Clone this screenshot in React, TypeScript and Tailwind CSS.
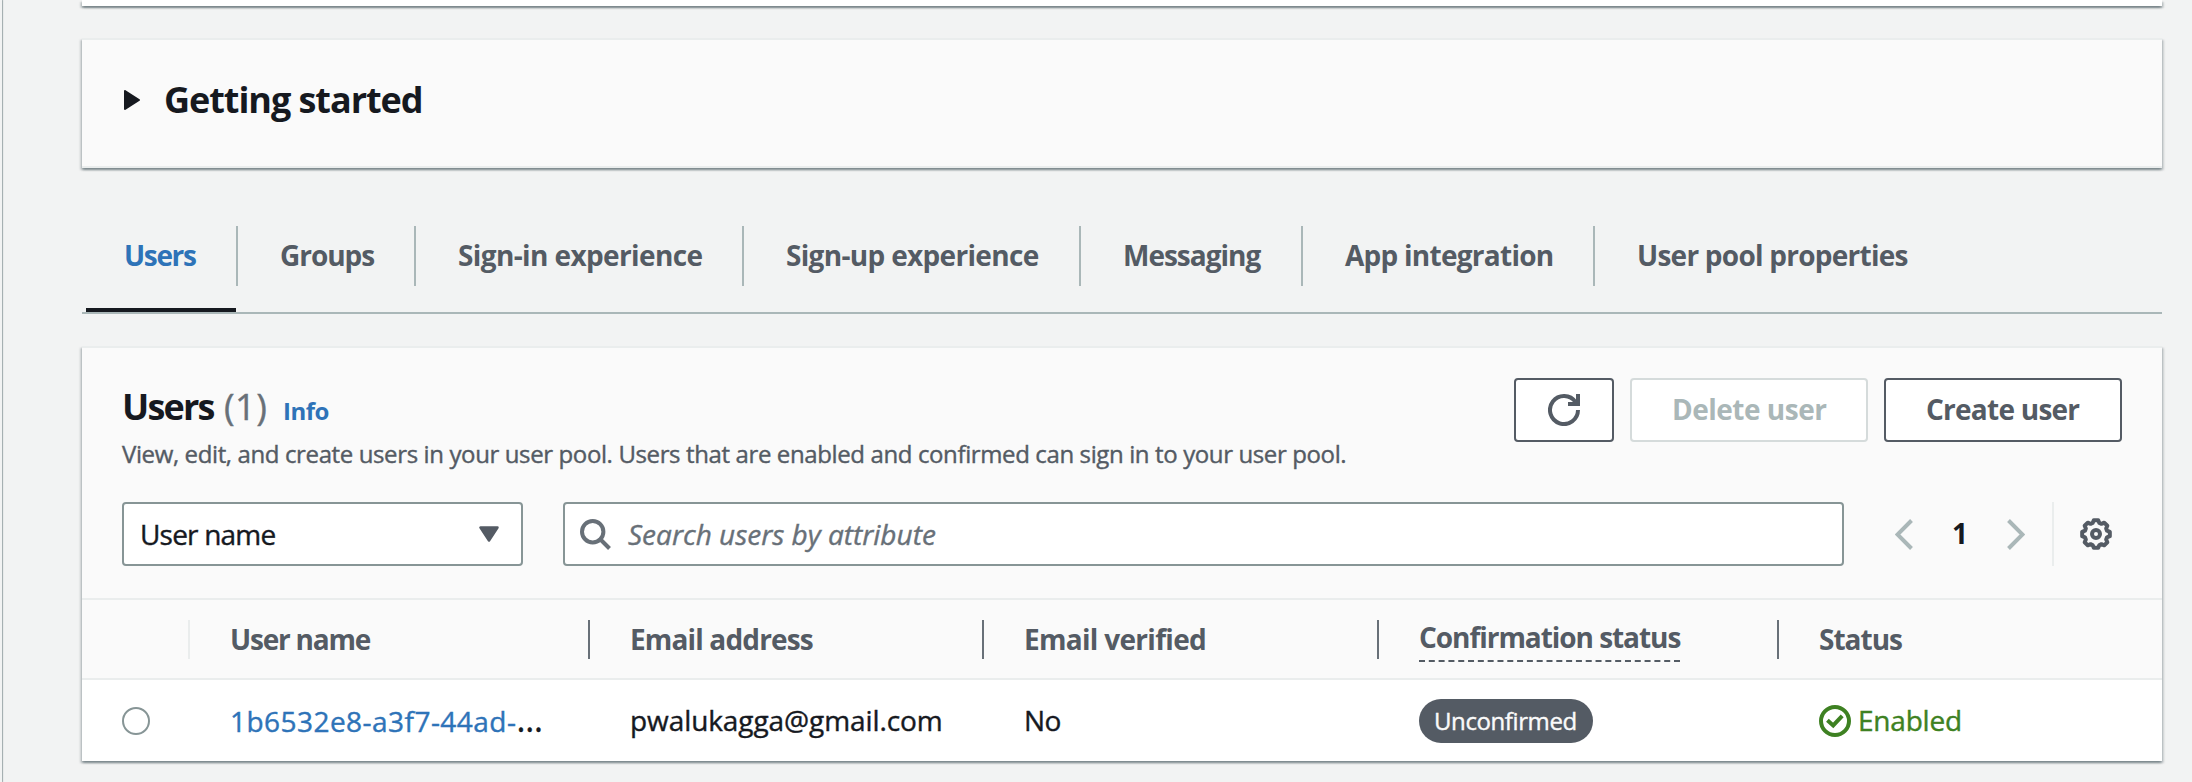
import React from "react";

const CARD_SHADOW =
  "shadow-[0_2px_2px_0_rgba(0,28,36,0.3),2px_2px_2px_0_rgba(0,28,36,0.15),-2px_2px_2px_0_rgba(0,28,36,0.15)]";

// Slightly sturdier strokes for regular-weight text.
const BODY = "[-webkit-text-stroke:0.4px_currentColor]";

const tabs = [
  { label: "Users", box: "w-[156px] pl-[42px] tracking-[-1.35px]", active: true },
  { label: "Groups", box: "w-[178px] pl-[42px] tracking-[-1.05px]" },
  { label: "Sign-in experience", box: "w-[328px] pl-[42px] tracking-[-0.62px]" },
  { label: "Sign-up experience", box: "w-[337px] pl-[42px] tracking-[-0.68px]" },
  { label: "Messaging", box: "w-[222px] pl-[42px] tracking-[-1px]" },
  { label: "App integration", box: "w-[292px] pl-[42px] tracking-[-0.74px]" },
  { label: "User pool properties", box: "w-[360px] pl-[42px] tracking-[-0.75px]" },
];

function gearOutline() {
  const points: string[] = [];
  for (let tooth = 0; tooth < 8; tooth++) {
    for (const [radius, offset] of [[5.75, -17], [7, -9], [7, 9], [5.75, 17]]) {
      const angle = ((tooth * 45 + offset) * Math.PI) / 180;
      points.push(`${(8 + radius * Math.sin(angle)).toFixed(2)} ${(8 - radius * Math.cos(angle)).toFixed(2)}`);
    }
  }
  return `M${points.join("L")}Z`;
}

function RefreshIcon() {
  return (
    <svg className="size-8" viewBox="0 0 16 16" fill="none" stroke="#545b64" strokeWidth="2">
      <path d="M15 8a7 7 0 1 1-1.2-3.9" />
      <path d="M10 5h5V0" />
    </svg>
  );
}

function GearIcon() {
  return (
    <svg className="ml-[26px] size-8 shrink-0" viewBox="0 0 16 16" fill="none" stroke="#545b64" strokeWidth="2">
      <path d={gearOutline()} strokeLinejoin="round" />
      <circle cx="8" cy="8" r="2" />
    </svg>
  );
}

function Chevron({ d, className }: { d: string; className?: string }) {
  return (
    <svg className={`h-[31px] w-[18px] shrink-0 ${className ?? ""}`} viewBox="0 0 18 31" fill="none" stroke="#aab7b8" strokeWidth="4">
      <path d={d} />
    </svg>
  );
}

function HeaderCell({ children, className, last }: { children?: React.ReactNode; className: string; last?: boolean }) {
  return (
    <div className={`flex h-[39px] items-center ${last ? "" : "border-r-2"} ${className}`}>{children}</div>
  );
}

export default function App() {
  return (
    <div className="flex h-[782px] w-[2192px] overflow-hidden bg-[#f2f3f3] font-['Open_Sans','Noto_Sans',sans-serif] text-[28px] leading-9 text-[#16191f]">
      <aside className="w-[2px] shrink-0 shadow-[1px_0_1px_0_rgba(0,28,36,0.35)]" />
      <main className="flex w-[2160px] shrink-0 flex-col pl-20">
        <section className={`h-[6px] shrink-0 bg-white ${CARD_SHADOW}`} />

        <section className={`mt-8 flex h-[130px] shrink-0 items-center border-y-2 border-[#eaeded] bg-[#fafafa] pb-[7px] pl-[42px] ${CARD_SHADOW}`}>
          <svg className="h-5 w-4" viewBox="0 0 16 20">
            <path d="M1 1v18L15 10z" fill="#16191f" stroke="#16191f" strokeWidth="2" strokeLinejoin="round" />
          </svg>
          <h2 className="ml-6 text-[36px] leading-[44px] font-bold tracking-[-1.05px]">Getting started</h2>
        </section>

        <nav className="mt-[58px] flex h-[88px] shrink-0 border-b-2 border-[#aab7b8]">
          {tabs.map((tab, i) => (
            <div key={tab.label} className={`relative shrink-0 font-bold whitespace-nowrap ${tab.box} ${tab.active ? "text-[#2e73b8]" : "text-[#545b64]"}`}>
              <div className="flex h-[60px] items-center pb-[2px]">{tab.label}</div>
              {i < tabs.length - 1 && <span className="absolute top-0 right-0 h-[60px] w-[2px] bg-[#aab7b8]" />}
              {tab.active && <span className="absolute bottom-0 left-1 h-1 w-[150px] bg-[#16191f]" />}
            </div>
          ))}
        </nav>

        <section className={`mt-8 shrink-0 border-t-2 border-[#eaeded] bg-[#fafafa] ${CARD_SHADOW}`}>
          <header className="flex h-[154px] items-start justify-between px-10 pt-[30px]">
            <div className="pt-[7px]">
              <div className="flex h-[44px] items-baseline leading-[44px] whitespace-nowrap">
                <h2 className="w-[102px] text-[36px] font-bold tracking-[-1.8px]">Users</h2>
                <span className={`w-[59px] text-[36px] tracking-[0.5px] text-[#687078] ${BODY}`}>(1)</span>
                <a className="text-[24px] font-bold tracking-[-0.5px] text-[#2e73b8]">Info</a>
              </div>
              <p className={`mt-[9px] text-[24px] leading-8 tracking-[-0.38px] whitespace-nowrap text-[#545b64] ${BODY}`}>
                View, edit, and create users in your user pool. Users that are enabled and confirmed can sign in to your user pool.
              </p>
            </div>
            <div className="flex gap-4 font-bold whitespace-nowrap">
              <button className="flex h-16 w-[100px] items-center justify-center rounded-[4px] border-2 border-[#545b64] bg-white">
                <RefreshIcon />
              </button>
              <button className="flex h-16 w-[238px] items-center rounded-[4px] border-2 border-[#d5dbdb] bg-white pb-[3px] pl-[40px] tracking-[-0.5px] text-[#aab7b8]">
                Delete user
              </button>
              <button className="flex h-16 w-[238px] items-center rounded-[4px] border-2 border-[#545b64] bg-white pb-[3px] pl-[40px] tracking-[-0.75px] text-[#545b64]">
                Create user
              </button>
            </div>
          </header>

          <div className="flex h-24 items-start pl-10">
            <div className="flex h-16 w-[401px] shrink-0 items-center justify-between rounded-[4px] border-2 border-[#879596] bg-white pr-[22px] pl-[16px]">
              <span className={`pb-px tracking-[-0.8px] ${BODY}`}>User name</span>
              <svg className="h-4 w-5" viewBox="0 0 20 16">
                <path d="M1.5 1.5h17L10 14.5z" fill="#545b64" stroke="#545b64" strokeWidth="2.5" strokeLinejoin="round" />
              </svg>
            </div>
            <div className="ml-10 flex h-16 w-[1281px] shrink-0 items-center rounded-[4px] border-2 border-[#879596] bg-white pl-[15px]">
              <svg className="size-8 shrink-0" viewBox="0 0 32 32" fill="none" stroke="#687078" strokeWidth="4">
                <circle cx="12.7" cy="13.7" r="10.7" />
                <path d="m20 21 9.5 9.5" />
              </svg>
              <span className={`ml-[16px] text-[#687078] italic ${BODY}`}>Search users by attribute</span>
            </div>
            <div className="flex h-16 items-center">
              <Chevron className="ml-[51px]" d="M16.5 1.5l-14 14 14 14" />
              <span className="w-[94px] pb-[2px] text-center font-bold">1</span>
              <Chevron d="M1.5 1.5l14 14-14 14" />
              <span className="ml-[27px] h-16 w-[2px] bg-[#eaeded]" />
              <GearIcon />
            </div>
          </div>

          <div className="grid h-[82px] grid-cols-[108px_400px_394px_395px_400px_383px] items-center border-y-2 border-[#eaeded] font-bold whitespace-nowrap text-[#545b64]">
            <HeaderCell className="border-[#eaeded]" />
            <HeaderCell className="border-[#687078] pl-10 tracking-[-1.2px]">User name</HeaderCell>
            <HeaderCell className="border-[#687078] pl-10 tracking-[-0.85px]">Email address</HeaderCell>
            <HeaderCell className="border-[#687078] pl-10 tracking-[-0.7px]">Email verified</HeaderCell>
            <HeaderCell className="border-[#687078] pl-10">
              <span className="mt-[2px] h-[44px] w-[261px] border-b-2 border-dashed border-[#545b64] leading-[38px] tracking-[-1.05px]">
                Confirmation status
              </span>
            </HeaderCell>
            <HeaderCell last className="pl-10 tracking-[-1px]">
              Status
            </HeaderCell>
          </div>

          <div className={`grid h-[81px] grid-cols-[108px_400px_394px_395px_400px_383px] items-center bg-white whitespace-nowrap ${BODY}`}>
            <div className="pl-10">
              <div className="size-7 rounded-full border-2 border-[#879596] bg-white" />
            </div>
            <div className="flex items-baseline pb-px pl-10">
              <a className="tracking-[0.46px] text-[#2e73b8]">1b6532e8-a3f7-44ad-</a>
              <span className="text-[34px] leading-9">…</span>
            </div>
            <div className="pb-px pl-10 tracking-[-0.08px]">pwalukagga@gmail.com</div>
            <div className="pb-px pl-10 tracking-[-0.5px]">No</div>
            <div className="pl-10">
              <span className="flex h-11 w-[174px] items-center rounded-[22px] bg-[#545b64] pl-[15px] text-[24px] tracking-[-0.4px] text-[#fafafa]">
                Unconfirmed
              </span>
            </div>
            <div className="flex items-center pl-10 text-[#3e8122]">
              <svg className="size-8" viewBox="0 0 16 16" fill="none" stroke="currentColor" strokeWidth="2">
                <circle cx="8" cy="8" r="7" />
                <path d="M4.2 7.6 7.1 10.2 11.6 5.4" />
              </svg>
              <span className="ml-[7px] pb-px tracking-[-0.2px]">Enabled</span>
            </div>
          </div>
        </section>
      </main>
    </div>
  );
}
